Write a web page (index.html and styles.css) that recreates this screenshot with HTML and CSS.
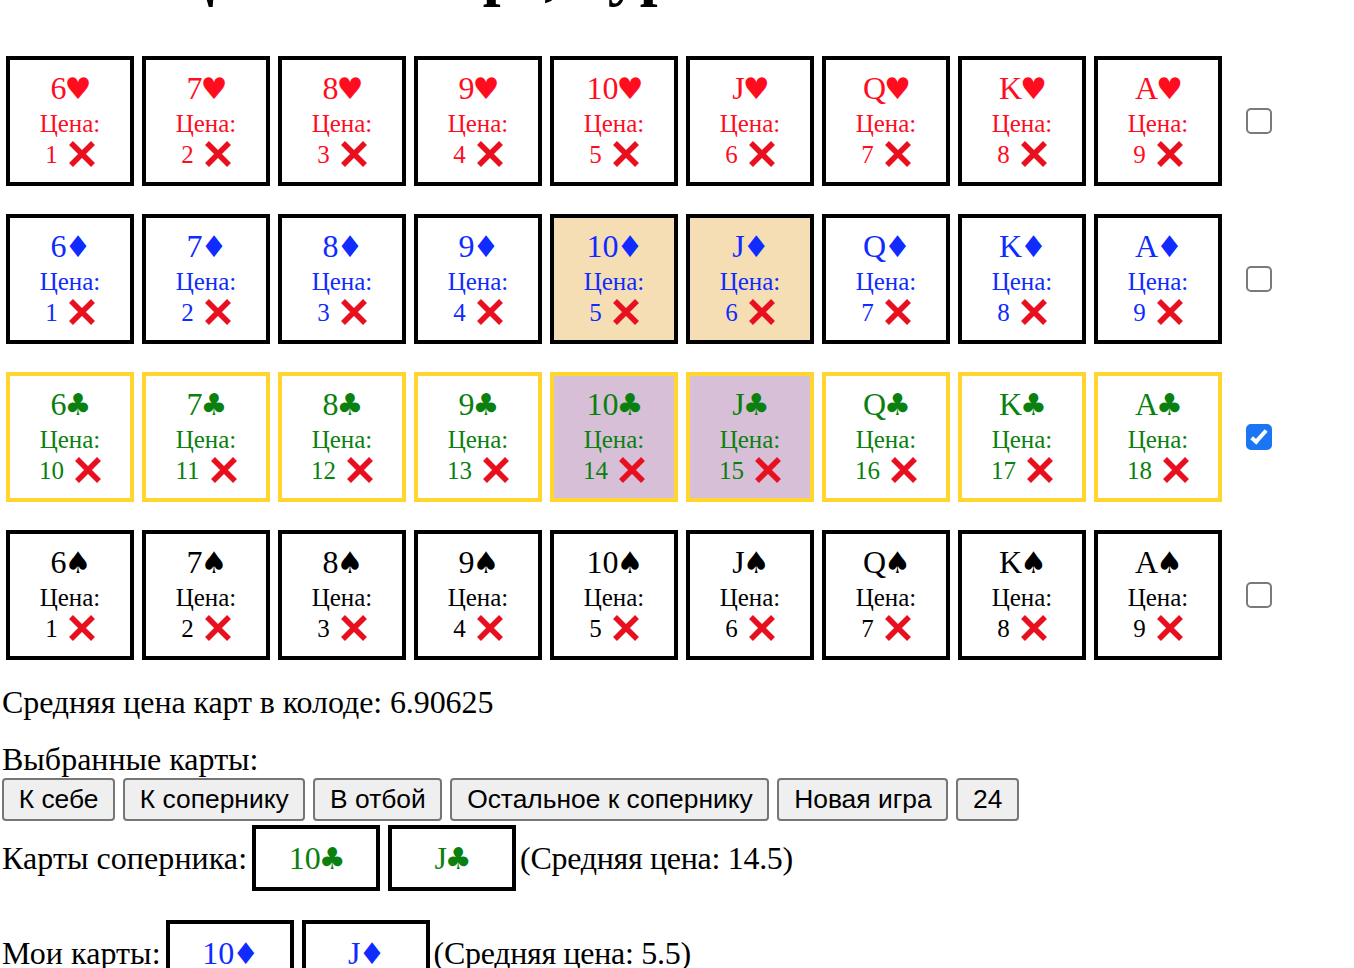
FILE: index.html
```html
<!DOCTYPE html>
<html lang="ru">
<head>
<meta charset="utf-8">
<title>Карты</title>
<link rel="stylesheet" href="styles.css">
</head>
<body>
<main class="page">
<h1 class="title">Цена их карт, тур 1</h1>
<section class="board" id="board"></section>
<p class="avg">Средняя цена карт в колоде: 6.90625</p>
<div class="label">Выбранные карты:</div>
<div class="actions">
<button class="btn">К себе</button><button class="btn">К сопернику</button><button class="btn">В отбой</button><button class="btn">Остальное к сопернику</button><button class="btn">Новая игра</button><button class="btn">24</button>
</div>
<div class="hand"><span class="who">Карты соперника:</span><div class="card mini green"><div class="rank">10<span class="suit">♣</span></div></div><div class="card mini green"><div class="rank">J<span class="suit">♣</span></div></div><span class="mean">(Средняя цена: 14.5)</span></div>
<div class="hand mine"><span class="who">Мои карты:</span><div class="card mini blue"><div class="rank">10<span class="suit">♦</span></div></div><div class="card mini blue"><div class="rank">J<span class="suit">♦</span></div></div><span class="mean">(Средняя цена: 5.5)</span></div>
</main>
<script>
const X='<svg class="x" viewBox="0 0 26 26"><path d="M2 2 L24 24 M24 2 L2 24" stroke="#e8101f" stroke-width="5.5"/></svg>';
const ranks=['6','7','8','9','10','J','Q','K','A'];
const suits=[['♥','red',1],['♦','blue',1],['♣','green',10],['♠','black',1]];
let h='';
suits.forEach((s,i)=>{
  h+='<div class="row'+(i==2?' picked':'')+'">';
  ranks.forEach((r,j)=>{
    let c='card '+s[1];
    if(i==1&&(j==4||j==5))c+=' mine-bg';
    if(i==2&&(j==4||j==5))c+=' opp-bg';
    h+='<div class="'+c+'"><div class="rank">'+r+'<span class="suit">'+s[0]+'</span></div><div class="price">Цена:</div><div class="cost"><span>'+(s[2]+j)+'</span>'+X+'</div></div>';
  });
  h+='<input class="check" type="checkbox"'+(i==2?' checked':'')+'></div>';
});
document.getElementById('board').innerHTML=h;
</script>
</body>
</html>
```
FILE: styles.css
```css
html, body { margin: 0; padding: 0; background: #fff; overflow: hidden; height: 968px; }
body { font-family: "Liberation Serif", "Times New Roman", serif; font-size: 32px; color: #000; }
.page { padding-left: 2px; margin-top: -56px; }
.title { margin: 0; height: 112px; font-size: 64px; line-height: 55px; padding-left: 163px; white-space: nowrap; word-spacing: 1px; }
.board { display: flex; flex-direction: column; gap: 28px; padding-left: 4px; }
.row { display: flex; gap: 8px; align-items: center; }
.card { box-sizing: border-box; width: 128px; height: 130px; border: 4px solid #000; display: flex; flex-direction: column; align-items: center; padding-top: 10px; background: #fff; }
.picked .card { border-color: #ffd52e; }
.mine-bg { background: #f5deb3; }
.opp-bg { background: #d8bfd8; }
.red { color: #ff0d1f; }
.blue { color: #0f2bff; }
.green { color: #0a800f; }
.black { color: #000; }
.rank { font-size: 32px; line-height: 37px; height: 37px; white-space: nowrap; }
.suit { font-family: "DejaVu Sans", sans-serif; font-size: 30px; line-height: 1; margin: 0 -2px; }
.price { font-size: 25px; line-height: 28px; margin-top: 3px; }
.cost { display: flex; align-items: center; gap: 11px; font-size: 25px; line-height: 28px; height: 34px; }
.x { width: 26px; height: 26px; display: block; margin-top: -2px; }
.check { appearance: none; box-sizing: border-box; position: relative; width: 26px; height: 26px; margin: 0 0 0 16px; background: #fff; border: 2px solid #7a7a7a; border-radius: 5px; }
.check:checked { background: #1a76f2; border-color: #1a76f2; }
.check:checked::after { content: ""; position: absolute; left: 7px; top: 1px; box-sizing: border-box; width: 8px; height: 17px; border-right: 4px solid #fff; border-bottom: 4px solid #fff; transform: rotate(42deg); }
.avg { margin: 24px 0 0; font-size: 32px; line-height: 37px; letter-spacing: -0.09px; }
.label { margin-top: 20px; line-height: 37px; }
.actions { display: flex; gap: 8px; }
.btn { box-sizing: border-box; height: 43px; padding: 0 14.7px; font-family: "Liberation Sans", Arial, sans-serif; font-size: 26.4px; color: #000; background: #efefef; border: 2px solid #767676; border-radius: 4px; }
.hand { display: flex; align-items: center; gap: 8px; margin-top: 4px; }
.who { margin-right: -3px; letter-spacing: 0.06px; }
.mean { margin-left: -4px; letter-spacing: -0.3px; }
.card.mini { height: 66px; padding-top: 0; justify-content: center; }
.mine { margin-top: 29px; }
```
